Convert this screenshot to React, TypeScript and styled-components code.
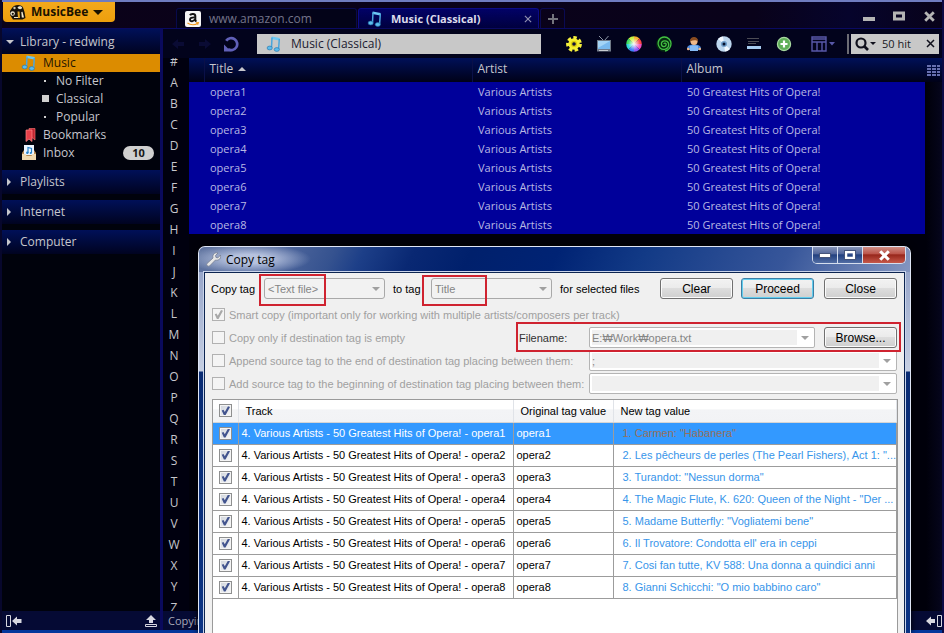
import React from 'react';
import styled, { createGlobalStyle, css } from 'styled-components';

const GlobalStyle = createGlobalStyle`
  *, *::before, *::after { box-sizing: border-box; }
  html, body { margin: 0; background: #00000c; }
  body { font-family: 'Open Sans', 'Noto Sans', sans-serif; font-size: 11px; line-height: 18px; color: #c6c6cc; overflow: hidden; }
  button, input, select { font: inherit; color: inherit; margin: 0; padding: 0; border: 0; background: none; border-radius: 0; outline: 0; }
  svg { display: block; flex: none; }
  ul { margin: 0; padding: 0; list-style: none; }
  table { border-collapse: collapse; table-layout: fixed; width: 100%; }
  th, td { text-align: left; font-weight: 400; padding: 0; }
  h2 { margin: 0; font-weight: 400; font-size: 11px; }
`;

/* ---------- main window ---------- */

const Frame = styled.div`
  position: relative;
  height: 100vh;
  display: flex;
  flex-direction: column;
  overflow: hidden;
  background: #00000c;
  border-left: 2px solid #07072c;
  border-right: 2px solid #0b0a44;
`;

const TitleBar = styled.header`
  display: flex;
  align-items: flex-end;
  height: 29px;
  flex: none;
  border-top: 2px solid #6f7cc0;
  border-bottom: 1px solid #0a0a62;
  background: linear-gradient(90deg, #0b0219 0%, #09021a 80%, #06042c 90%, #08021a 100%);
`;

const AppButton = styled.button`
  display: flex;
  align-items: center;
  align-self: flex-start;
  gap: 5px;
  width: 112px;
  height: 20px;
  margin-left: 1px;
  padding-left: 6px;
  border-radius: 0 0 4px 4px;
  background: linear-gradient(#f3a91c, #ee9f0c);
  color: #1a1200;
  font-size: 12px;
  font-weight: 700;
`;

const Tabs = styled.div`
  display: flex;
  flex: 1;
  gap: 1px;
  height: 20px;
  margin-left: 61px;
`;

const Tab = styled.button<{ $active?: boolean }>`
  display: flex;
  align-items: center;
  width: 181px;
  padding: 0 6px 0 8px;
  border: 1px solid ${p => (p.$active ? '#0c0c86' : '#080a4c')};
  border-bottom: 0;
  border-radius: 3px 3px 0 0;
  background: ${p => (p.$active ? 'linear-gradient(#020266, #00003e)' : '#030318')};
  color: ${p => (p.$active ? '#dcdcec' : '#74748a')};
  font-size: ${p => (p.$active ? '11px' : '12px')};
  font-weight: ${p => (p.$active ? 700 : 400)};
  gap: 8px;
  text-align: left;
  & > span { flex: 1; }
`;

const NewTab = styled.button`
  display: grid;
  place-items: center;
  width: 25px;
  border: 1px solid #0a0a52;
  border-bottom: 0;
  border-radius: 3px 3px 0 0;
`;

const WindowControls = styled.div`
  display: flex;
  gap: 16px;
  align-self: flex-start;
  padding: 6px 6px 0 0;
`;

const IconButton = styled.button`
  display: grid;
  place-items: center;
  min-width: 14px;
  min-height: 16px;
`;

const Workspace = styled.div`
  flex: 1;
  min-height: 0;
  display: grid;
  grid-template-columns: 161px minmax(0, 1fr);
`;

const Sidebar = styled.aside`
  display: flex;
  flex-direction: column;
  border-right: 3px solid #0a0a5c;
  background: #00020c;
`;

const SideSection = styled.section`
  margin-bottom: 6px;
  & > ul { padding-bottom: 2px; }
`;

const SideHeader = styled.button<{ $first?: boolean }>`
  display: flex;
  align-items: center;
  width: 100%;
  height: ${p => (p.$first ? '25px' : '24px')};
  padding-left: 4px;
  gap: ${p => (p.$first ? '6px' : '8px')};
  background: linear-gradient(#001058, #000320);
  font-size: 12px;
  & > svg { width: ${p => (p.$first ? '8px' : '6px')}; }
`;

const SideItem = styled.li<{ $level?: number; $selected?: boolean }>`
  display: flex;
  align-items: center;
  height: 18px;
  padding-left: ${p => (p.$level === 2 ? '38px' : '19px')};
  padding-right: 6px;
  gap: ${p => (p.$level === 2 ? '4px' : '6px')};
  ${p => p.$selected && css`background: #dc8c00; color: #241600;`}
`;

const SideLink = styled.a`
  flex: 1;
  color: inherit;
  text-decoration: none;
  font-size: 12px;
`;

const Count = styled.span`
  width: 31px;
  border-radius: 7px;
  background: #d0d0d0;
  color: #181818;
  font-size: 11px;
  font-weight: 700;
  line-height: 14px;
  text-align: center;
`;

const Main = styled.main`
  display: flex;
  flex-direction: column;
  min-width: 0;
  min-height: 0;
`;

const Toolbar = styled.div`
  display: flex;
  align-items: center;
  height: 29px;
  flex: none;
  padding-right: 3px;
  background: #02031c;
`;

const NavButtons = styled.div`
  display: flex;
  gap: 12px;
  padding: 0 18px 0 8px;
`;

const AddressBox = styled.label`
  display: flex;
  align-items: center;
  flex: 1;
  height: 20px;
  gap: 9px;
  padding-left: 9px;
  background: #c8c8c8;
  color: #1b1b30;
  & > input { flex: 1; min-width: 0; font-size: 12px; }
`;

const ToolIcons = styled.div`
  display: flex;
  gap: 14px;
  padding: 0 19px 0 25px;
`;

const SearchGroup = styled.div`
  display: flex;
  align-items: center;
  width: 92px;
  height: 20px;
  margin-left: 11px;
  padding: 0 4px 0 6px;
  gap: 6px;
  border-left: 2px solid #6c6c74;
  background: linear-gradient(90deg, #02031c 2px, #c8c8c8 2px);
  color: #181824;
  & > input { flex: 1; min-width: 0; font-size: 11px; }
`;

const Browser = styled.div`
  flex: 1;
  min-height: 0;
  display: grid;
  grid-template-columns: 26px minmax(0, 1fr);
`;

const LetterBar = styled.nav`
  display: flex;
  flex-direction: column;
  overflow: hidden;
  padding-right: 4px;
  background: #00000f;
  & > button { flex: none; height: 21px; line-height: 21px; font-size: 12px; }
  & > button:first-child { height: 14px; line-height: 8px; padding-bottom: 6px; }
`;

const TrackPane = styled.div`
  overflow: hidden;
  background: linear-gradient(270deg, #05051c, #00000a 16px);
`;

const TrackTable = styled.table`
  thead tr { height: 24px; background: linear-gradient(#001058, #000118); }
  tbody tr { height: 19px; }
  tbody td:not(:last-child) { background: #00009a; }
  th, td { padding-left: 6px; white-space: nowrap; overflow: hidden; }
  th { padding-left: 5px; font-size: 12px; line-height: 22px; border-left: 1px solid #0a1048; vertical-align: top; }
  th:first-child, th:last-child { border-left: 0; padding-left: 2px; }
  th:last-child { vertical-align: middle; }
  td { color: #b8b8e4; line-height: 19px; }
`;

const SortLabel = styled.span`
  display: flex;
  align-items: center;
  gap: 5px;
`;

const StatusBar = styled.footer`
  display: grid;
  grid-template-columns: 161px 1fr auto;
  align-items: center;
  height: 22px;
  flex: none;
  border-bottom: 3px solid #04379c;
  background: #050a34;
  color: #a8a8b8;
`;

const StatusLeft = styled.div`
  display: flex;
  justify-content: space-between;
  height: 19px;
  align-items: center;
  padding: 0 2px 0 4px;
  border-right: 3px solid #0a0a5c;
`;

const StatusText = styled.span`
  padding-left: 5px;
`;

/* ---------- dialog ---------- */

const Dialog = styled.section`
  position: absolute;
  left: 196px;
  right: 31px;
  top: 246px;
  bottom: 0;
  display: flex;
  flex-direction: column;
  padding: 0 5px;
  border: 1px solid #dfe6f6;
  border-bottom: 0;
  border-radius: 7px 7px 0 0;
  background: linear-gradient(#8c9cc4 0, #c6cfe2 124px, #0a2c74 125px, #0c3484 100%);
  box-shadow: 0 0 6px #000;
  font-family: 'Liberation Sans', Arial, 'Noto Sans CJK KR', sans-serif;
  font-size: 11px;
  color: #000;
`;

const DialogTitle = styled.div`
  display: flex;
  height: 25px;
  flex: none;
  margin: 0 -5px;
  padding: 0 4px 0 7px;
  border-radius: 6px 6px 0 0;
  background:
    radial-gradient(ellipse 62px 15px at 50px 12px, #b6c2de 30%, transparent),
    linear-gradient(115deg, #60749f 0, #52699e 11%, #35528f 19%, #1d3f88 23%, #092873 30%, #00206c 38%, #002374 50%, #123a86 62%, #37569a 82%, #8496c0 100%);
  & > h2 { flex: 1; padding-left: 5px; line-height: 25px; font-family: 'Open Sans', 'Noto Sans', sans-serif; font-size: 12px; }
  & > svg { margin-top: 4px; }
`;

const CaptionButtons = styled.div`
  display: flex;
  height: 17px;
  border: 1px solid #d5deee;
  border-top: 0;
  border-radius: 0 0 5px 5px;
  overflow: hidden;
`;

const CaptionButton = styled.button<{ $close?: boolean }>`
  display: grid;
  place-items: center;
  width: ${p => (p.$close ? '42px' : '25px')};
  border-right: ${p => (p.$close ? '0' : '1px solid #d5deee')};
  background: ${p =>
    p.$close
      ? 'linear-gradient(#cf8d84, #bb5147 45%, #96251a 48%, #c6584a)'
      : 'linear-gradient(#8492b6, #50659a 45%, #213f7e 48%, #526da4)'};
`;

const DialogBody = styled.div`
  flex: 1;
  min-height: 0;
  display: flex;
  flex-direction: column;
  border: 1px solid #0c2450;
  border-bottom: 0;
  padding: 4px 7px 0 6px;
  background: #f0f0f0;
  outline: 1px solid #c9d4ea;
`;

const TopRow = styled.div`
  display: flex;
  align-items: center;
  height: 23px;
  margin-bottom: 3px;
  white-space: nowrap;
`;

const TagField = styled.div<{ $width: number }>`
  display: flex;
  align-items: center;
  justify-content: space-between;
  width: ${p => p.$width}px;
  padding-right: 8px;
`;

const SelectWrap = styled.span`
  position: relative;
  display: block;
  width: 121px;
  height: 21px;
  & > select {
    appearance: none;
    width: 100%;
    height: 21px;
    padding-left: 3px;
    border: 1px solid #a9a9a9;
    border-radius: 3px;
    background: #f2f2f2;
    color: #858585;
    opacity: 1;
  }
  & > svg { position: absolute; right: 5px; top: 9px; pointer-events: none; }
`;

const Mark = styled.i<{ $left: string; $right: string; $top: string; $bottom: string }>`
  position: absolute;
  left: ${p => p.$left};
  right: ${p => p.$right};
  top: ${p => p.$top};
  bottom: ${p => p.$bottom};
  border: 2px solid #cf2330;
  pointer-events: none;
`;

const Buttons = styled.div`
  display: flex;
  flex: 1;
  justify-content: flex-end;
  gap: 8px;
  & > button:last-child { margin-left: 2px; }
`;

const PushButton = styled.button<{ $primary?: boolean }>`
  width: 73px;
  height: 21px;
  border: 1px solid ${p => (p.$primary ? '#3c7fa5' : '#707070')};
  border-radius: 3px;
  background: linear-gradient(#f2f2f2, #ebebeb 48%, #dddddd 50%, #cfcfcf);
  box-shadow: inset 0 0 0 1px ${p => (p.$primary ? '#62cdee' : '#fbfbfb')};
  color: #000;
  font-size: 12px;
  line-height: 18px;
  text-align: center;
`;

const Options = styled.div`
  position: relative;
  display: grid;
  grid-template-columns: 378px minmax(0, 1fr) 73px;
  grid-auto-rows: 23px;
  align-items: center;
  margin-bottom: 4px;
  & > button { grid-column: 3; }
`;

const Cell = styled.div<{ $from?: number; $to?: number; $gap?: boolean }>`
  display: flex;
  align-items: center;
  justify-content: space-between;
  grid-column: ${p => p.$from ?? 1} / ${p => p.$to ?? 2};
  padding-right: ${p => (p.$gap ? '9px' : '0')};
  white-space: nowrap;
  & > label[for='filename'] { width: 70px; color: #333; }
`;

const CheckLabel = styled.label`
  display: flex;
  align-items: center;
  gap: 4px;
  padding-left: 1px;
  color: #a0a0a0;
`;

const Check = styled.input.attrs({ type: 'checkbox' })`
  appearance: none;
  display: grid;
  place-items: center;
  flex: none;
  width: 13px;
  height: 13px;
  border: 1px solid #8e8f8f;
  background: linear-gradient(135deg, #cfd4dc, #f8f8f8);
  box-shadow: inset 0 0 0 1px #f4f4f4;
  &:checked::before {
    content: '';
    width: 9px;
    height: 9px;
    background: #42548e;
    clip-path: polygon(8% 48%, 28% 40%, 42% 64%, 78% 0, 100% 8%, 50% 100%, 32% 100%);
  }
  &:disabled { border-color: #b1b1b1; background: #f4f4f4; }
  &:disabled::before { background: #a8a8a8; }
`;

const Combo = styled.div`
  position: relative;
  display: flex;
  flex: 1;
  height: 21px;
  padding: 2px;
  border: 1px solid #b4b4b4;
  border-radius: 2px;
  background: #fff;
  & > input { flex: 1; min-width: 0; background: #f0f0f0; color: #858585; padding-left: 0; }
  & > button { display: grid; place-items: center; width: 15px; }
`;

const TagTable = styled.div`
  flex: 1;
  min-height: 0;
  margin: 0 -1px 0 1px;
  border: 1px solid #9a9a9a;
  border-bottom: 0;
  background: #fff;
  overflow: hidden;
  table { width: 100%; }
  thead tr { height: 22px; background: linear-gradient(#fff 40%, #f3f4f6 45%, #f2f3f5); }
  th { border-right: 1px solid #e0e3e8; padding-left: 7px; border-bottom: 1px solid #d5d5d5; }
  tbody tr { height: 22px; }
  td { border: 1px solid #9c9c9c; border-left: 0; padding-left: 3px; overflow: hidden; white-space: nowrap; line-height: 20px; }
  td:last-child { padding: 0 0 0 9px; color: #3795ea; }
  th:first-child, td:first-child { padding: 0 0 0 6px; }
`;

const TagRow = styled.tr<{ $selected?: boolean }>`
  ${p => p.$selected && css`
    background: #3399ff;
    color: #fff;
    && td:last-child { color: #97705c; }
  `}
`;

/* ---------- drawings ---------- */

const NoteIcon = () => (
  <svg width="16" height="16" viewBox="0 0 16 16">
    <path d="M5.500 1.800 13.500 3.200" stroke="#6cc8f4" strokeWidth="2.600" />
    <path d="M6 1.500 5.500 11.500M13.300 3 12.600 13" stroke="#4aa6dc" strokeWidth="1.500" />
    <ellipse cx="3.700" cy="12" rx="2.600" ry="1.900" fill="#5cbcec" stroke="#1e6ea8" strokeWidth=".6" />
    <ellipse cx="10.800" cy="13.500" rx="2.600" ry="1.900" fill="#5cbcec" stroke="#1e6ea8" strokeWidth=".6" />
  </svg>
);

const BeeIcon = () => (
  <svg width="17" height="16" viewBox="0 0 17 16">
    <path d="M3 4C5 0 13 0 14 3.500l1.500 4.500 1 6-3 1.500H4L1 11V7z" fill="#16120a" />
    <path d="M8.500 3.500c1.500-2 4.500-1.500 4.700.5-.8 1.600-3.700 1.600-4.700-.5z" fill="#e9e4d0" />
    <circle cx="5.500" cy="4" r="1.200" fill="#cfc8b0" />
    <circle cx="3.600" cy="9.500" r="2.300" fill="#e8e2cc" />
    <circle cx="3.800" cy="9.800" r="1.100" fill="#16120a" />
    <path d="M8.500 7.500h2l.5 6.500H9z" fill="#e6a822" />
    <path d="m12.300 8 1.200-.2 1.500 5.700h-2.200z" fill="#f3ead0" />
    <path d="M5 13.500h4" stroke="#e8e2cc" />
  </svg>
);

const AmazonIcon = () => (
  <svg width="16" height="16" viewBox="0 0 16 16">
    <rect width="16" height="16" rx="2" fill="#f6f6f6" />
    <path d="M5 4.200C5.800 2.500 10.300 2.300 10.300 5v4.500l1 1.200" fill="none" stroke="#111" strokeWidth="2" />
    <path d="M9.800 6.400C6.500 6.200 5 7.200 5 8.700 5 11 9 10.800 9.900 8" fill="none" stroke="#111" strokeWidth="1.900" />
    <path d="M2.500 12c3 2.200 7.500 2.200 10.500.2M11 11.800l2.400-.2-.8 2.200" fill="none" stroke="#f09a20" strokeWidth="1.100" />
  </svg>
);

const Triangle = ({ dir = 'down', w = 7, color = '#c6c6cc' }: { dir?: 'down' | 'up' | 'right'; w?: number; color?: string }) => {
  const d = { down: 'M0 0h8L4 4z', up: 'M0 4h8L4 0z', right: 'M0 0v8l4-4z' }[dir];
  const side = dir === 'right';
  return (
    <svg width={side ? w / 2 : w} height={side ? w : w / 2} viewBox={side ? '0 0 4 8' : '0 0 8 4'}>
      <path d={d} fill={color} />
    </svg>
  );
};

const BookmarkIcon = () => (
  <svg width="16" height="16" viewBox="0 0 16 16">
    <path d="M8 1.500h6V13l-2.500-2L9 13z" fill="#c02430" stroke="#ee6a6a" strokeWidth=".7" />
    <path d="M5 3h6v11.500L8 12l-3 2.500z" fill="#e8404a" stroke="#ff8a8a" strokeWidth=".7" />
  </svg>
);

const InboxIcon = () => (
  <svg width="16" height="16" viewBox="0 0 16 16">
    <path d="M1 8 3 5h10l2 3v6.500H1z" fill="#b98a50" />
    <path d="M3 0h10v10H3z" fill="#edf5ff" />
    <path d="M7 8V2.500l3.500 1V8" stroke="#2782c8" strokeWidth="1.200" fill="none" />
    <circle cx="6.300" cy="7.800" r="1.200" fill="#2782c8" />
    <circle cx="9.800" cy="8" r="1.100" fill="#2782c8" />
    <path d="M1 9h3.500l1 2h5l1-2H15v6H1z" fill="#f1d9ae" />
  </svg>
);

const RefreshIcon = () => (
  <svg width="16" height="16" viewBox="0 0 16 16">
    <path d="M3.200 4.800A6 6 0 1 1 5 13.200" fill="none" stroke="#6060b8" strokeWidth="2.700" />
    <path d="M1 8.500v7h7z" fill="#6060b8" />
  </svg>
);

const ArrowIcon = ({ flip }: { flip?: boolean }) => (
  <svg width="13" height="12" viewBox="0 0 13 12">
    <path d={flip ? 'M13 6 7 1v3H1v4h6v3z' : 'M0 6l6-5v3h6v4H6v3z'} fill="#0a0b34" />
  </svg>
);

const GearIcon = () => (
  <svg width="16" height="16" viewBox="0 0 16 16">
    <circle cx="8" cy="8" r="5.700" fill="#f5ee2c" />
    <circle cx="8" cy="8" r="6.200" fill="none" stroke="#f5f03c" strokeWidth="3.400" strokeDasharray="3.300 2.265" />
    <circle cx="8" cy="8" r="3" fill="#d8c80c" />
    <circle cx="8" cy="8" r="1.800" fill="#14143c" />
  </svg>
);

const TvIcon = () => (
  <svg width="16" height="16" viewBox="0 0 16 16">
    <path d="m3 0 5 5 4.500-5" fill="none" stroke="#8c96a4" />
    <rect x="1" y="4" width="14" height="11.500" fill="#707a88" />
    <rect x="2" y="5" width="12" height="8" fill="#79b9ee" />
    <path d="M2 5h12L2 12z" fill="#a4d4f6" />
    <path d="M3 14.500h9" stroke="#c8ccd2" />
  </svg>
);

const wheel = ['#f8b030', '#fa4848', '#f050c0', '#9058f8', '#4080f8', '#30d8d8', '#40e060', '#c8f040'];
const ColorIcon = () => (
  <svg width="16" height="16" viewBox="-8 -8 16 16">
    <defs>
      <radialGradient id="wheelGlow"><stop offset="0" stopColor="#fff" /><stop offset=".8" stopColor="#fff" stopOpacity="0" /></radialGradient>
    </defs>
    {wheel.map((c, i) => (
      <path key={c} d="M0 0V-7.800A7.800 7.800 0 0 1 5.520-5.520z" fill={c} transform={`rotate(${i * 45})`} />
    ))}
    <circle r="7.800" fill="url(#wheelGlow)" />
  </svg>
);

const SpiralIcon = () => (
  <svg width="16" height="16" viewBox="0 0 16 16">
    <circle cx="8" cy="8" r="7.800" fill="#052a10" />
    <path d="M8 8c0-1.500 2.400-1 2.200.7-.3 2.600-4.800 2.500-4.800-.7 0-4 6.200-4.400 7.200-.4 1 5-5.300 7.400-8.500 4.400C-.4 7 3.600 1 8.500 1c3.500 0 6.500 3 6.500 6.500 0 3-2 6.500-6 7.500" fill="none" stroke="#44c044" strokeWidth="1.300" />
  </svg>
);

const PersonIcon = () => (
  <svg width="16" height="16" viewBox="0 0 16 16">
    <path d="M1 13c0-3.500 3-4.500 7-4.500s7 1 7 4.500l-2 1H3z" fill="#4a8ae0" />
    <path d="M4 10c2-1 6-1 8 0v5H4z" fill="#86baf4" />
    <circle cx="2.300" cy="13" r="1.300" fill="#f0b888" />
    <circle cx="13.700" cy="13" r="1.300" fill="#f0b888" />
    <circle cx="8" cy="5.300" r="3.600" fill="#f0b888" />
    <path d="M4 5.500C3.500-.5 12.500-.5 12 5.500 10 3.500 7 4 4 5.500z" fill="#8a4c20" />
  </svg>
);

const DiscIcon = () => (
  <svg width="16" height="16" viewBox="0 0 16 16">
    <circle cx="8" cy="8" r="7.700" fill="#bcd6ee" />
    <path d="M8 8 2 3a8 8 0 0 1 5-2.600zM8 8l6 5a8 8 0 0 1-5 2.600z" fill="#f2f8ff" />
    <circle cx="8" cy="8" r="3" fill="#6e9cc8" />
    <circle cx="8" cy="8" r="1.500" fill="#06102c" />
  </svg>
);

const LinesIcon = () => (
  <svg width="16" height="16" viewBox="0 0 16 16">
    <path d="M1 2.500h12M2 5.500h11M2 7.500h8" stroke="#4c4c54" />
    <path d="M1 10h14v3H1z" fill="#a8cdf0" />
  </svg>
);

const PlusIcon = () => (
  <svg width="16" height="16" viewBox="0 0 16 16">
    <circle cx="8" cy="8" r="6.600" fill="#5fae58" stroke="#a8d8a0" strokeWidth="1.200" />
    <path d="M8 4.500v7M4.500 8h7" stroke="#fff" strokeWidth="2.200" />
  </svg>
);

const LayoutIcon = () => (
  <svg width="25" height="16" viewBox="0 0 25 16">
    <path d="M1 1h14v14H1zM1 6h14M6 6v9M11 6v9M1 3h14" fill="none" stroke="#5858a8" strokeWidth="1.400" />
    <path d="M18 6h6l-3 3.500z" fill="#5858a8" />
  </svg>
);

const SearchIcon = () => (
  <svg width="21" height="14" viewBox="0 0 21 14">
    <circle cx="6" cy="6" r="4.500" fill="none" stroke="#10101c" strokeWidth="2.200" />
    <path d="m9 9 4 4" stroke="#10101c" strokeWidth="2.600" />
    <path d="M15 5h6l-3 3z" fill="#10101c" />
  </svg>
);

const CrossIcon = ({ size = 9, color = '#10101c', w = 1.5 }: { size?: number; color?: string; w?: number }) => (
  <svg width={size} height={size} viewBox="0 0 9 9">
    <path d="m1 1 7 7M8 1 1 8" stroke={color} strokeWidth={w} />
  </svg>
);

const GridIcon = () => (
  <svg width="13" height="11" viewBox="0 0 13 11">
    {[0, 3, 6, 9].map(y => <path key={y} d={`M0 ${y + 1}h4M5 ${y + 1}h4M10 ${y + 1}h3`} stroke="#6870b0" strokeWidth="2" />)}
  </svg>
);

const DockIcon = ({ right }: { right?: boolean }) => (
  <svg width="16" height="12" viewBox="0 0 16 12">
    <path d={right ? 'M11.500 .5h4v11h-4z' : 'M.5 .5h4v11h-4z'} fill="none" stroke="#d8d8e0" />
    <path d={right ? 'M0 6l5-4.500V4h4v4H5v2.500z' : 'M6 6l5-4.500V4h4.500v4H11v2.500z'} fill="#d8d8e0" />
  </svg>
);

const EjectIcon = () => (
  <svg width="12" height="12" viewBox="0 0 12 12">
    <path d="m6 0 5 5H8v3H4V5H1z" fill="#d8d8e0" />
    <path d="M.5 9.500h11v2H.5z" fill="none" stroke="#d8d8e0" />
  </svg>
);

const WrenchIcon = () => (
  <svg width="15" height="16" viewBox="0 0 15 16">
    <path d="M1 12.500 7 7c-1-3 1.500-6 5-5L9.500 4.500l.5 2 2 .3L14.500 4c1 3.500-2 6-5 5L3.500 15C1.500 16 0 14 1 12.500z" fill="#e6e6e6" stroke="#747c90" strokeWidth=".8" />
  </svg>
);

/* ---------- data ---------- */

const tracks = Array.from({ length: 8 }, (_, i) => `opera${i + 1}`);
const letters = ['#', ...'ABCDEFGHIJKLMNOPQRSTUVWXYZ'];
const newTags = [
  '1. Carmen: "Habanera"',
  '2. Les pêcheurs de perles (The Pearl Fishers), Act 1: "...',
  '3. Turandot: "Nessun dorma"',
  '4. The Magic Flute, K. 620: Queen of the Night - "Der ...',
  '5. Madame Butterfly: "Vogliatemi bene"',
  "6. Il Trovatore: Condotta ell' era in ceppi",
  '7. Cosi fan tutte, KV 588: Una donna a quindici anni',
  '8. Gianni Schicchi: "O mio babbino caro"',
];
const tools = [
  ['Preferences', GearIcon], ['Video', TvIcon], ['Skins', ColorIcon], ['Visualiser', SpiralIcon],
  ['Artist', PersonIcon], ['Disc', DiscIcon], ['Playing', LinesIcon], ['Add', PlusIcon],
] as const;

const ComboField = ({ id, label, value }: { id: string; label?: string; value: string }) => (
  <Combo>
    <input id={id} aria-label={label} value={value} disabled readOnly />
    <button aria-label="Show choices" disabled><Triangle color="#a0a0a0" w={8} /></button>
  </Combo>
);

const CopyTagDialog = () => (
  <Dialog role="dialog" aria-labelledby="dialog-title">
    <DialogTitle>
      <WrenchIcon />
      <h2 id="dialog-title">Copy tag</h2>
      <CaptionButtons>
        <CaptionButton aria-label="Minimize">
          <svg width="12" height="5"><rect x=".5" y=".5" width="11" height="4" fill="#fff" stroke="#46557a" /></svg>
        </CaptionButton>
        <CaptionButton aria-label="Maximize">
          <svg width="12" height="10"><rect x="2" y="2" width="8" height="6" fill="none" stroke="#fff" strokeWidth="2.500" /><rect x=".5" y=".5" width="11" height="9" fill="none" stroke="#46557a" /></svg>
        </CaptionButton>
        <CaptionButton $close aria-label="Close dialog"><CrossIcon size={11} color="#fff" w={2.5} /></CaptionButton>
      </CaptionButtons>
    </DialogTitle>
    <DialogBody>
      <TopRow>
        <TagField $width={182}>
          <label htmlFor="source">Copy tag</label>
          <SelectWrap>
            <select id="source" disabled><option>&lt;Text file&gt;</option></select>
            <Triangle color="#a0a0a0" w={8} />
            <Mark $left="-5px" $right="59px" $top="-4px" $bottom="-7px" />
          </SelectWrap>
        </TagField>
        <TagField $width={167}>
          <label htmlFor="target">to tag</label>
          <SelectWrap>
            <select id="target" disabled><option>Title</option></select>
            <Triangle color="#a0a0a0" w={8} />
            <Mark $left="-9px" $right="65px" $top="-3px" $bottom="-7px" />
          </SelectWrap>
        </TagField>
        <span>for selected files</span>
        <Buttons>
          <PushButton>Clear</PushButton>
          <PushButton $primary>Proceed</PushButton>
          <PushButton>Close</PushButton>
        </Buttons>
      </TopRow>
      <Options>
        <Cell $to={4}>
          <CheckLabel><Check disabled defaultChecked />Smart copy (important only for working with multiple artists/composers per track)</CheckLabel>
        </Cell>
        <Cell>
          <CheckLabel><Check disabled />Copy only if destination tag is empty</CheckLabel>
          <label htmlFor="filename">Filename:</label>
        </Cell>
        <Cell $from={2} $to={3} $gap><ComboField id="filename" value="E:₩Work₩opera.txt" /></Cell>
        <PushButton>Browse...</PushButton>
        <Cell><CheckLabel><Check disabled />Append source tag to the end of destination tag placing between them:</CheckLabel></Cell>
        <Cell $from={2} $to={4}><ComboField id="append" label="Separator when appending" value=";" /></Cell>
        <Cell><CheckLabel><Check disabled />Add source tag to the beginning of destination tag placing between them:</CheckLabel></Cell>
        <Cell $from={2} $to={4}><ComboField id="prepend" label="Separator when prepending" value="" /></Cell>
        <Mark $left="305px" $right="-4px" $top="19px" $bottom="43px" />
      </Options>
      <TagTable>
        <table>
          <colgroup><col width="25" /><col width="275" /><col width="100" /><col /></colgroup>
          <thead>
            <tr><th><Check defaultChecked aria-label="Select all tracks" /></th><th>Track</th><th>Original tag value</th><th>New tag value</th></tr>
          </thead>
          <tbody>
            {tracks.map((t, i) => (
              <TagRow key={t} $selected={i === 0}>
                <td><Check defaultChecked aria-label={`Include ${t}`} /></td>
                <td>4. Various Artists - 50 Greatest Hits of Opera! - {t}</td>
                <td>{t}</td>
                <td>{newTags[i]}</td>
              </TagRow>
            ))}
          </tbody>
        </table>
      </TagTable>
    </DialogBody>
  </Dialog>
);

export default function App() {
  return (
    <Frame>
      <GlobalStyle />
      <TitleBar>
        <AppButton><BeeIcon />MusicBee<Triangle color="#1a1200" w={10} /></AppButton>
        <Tabs>
          <Tab><AmazonIcon /><span>www.amazon.com</span></Tab>
          <Tab $active><NoteIcon /><span>Music (Classical)</span><CrossIcon size={8} color="#9090b0" w={1.3} /></Tab>
          <NewTab aria-label="New tab">
            <svg width="10" height="10"><path d="M5 0v10M0 5h10" stroke="#74747c" strokeWidth="2" /></svg>
          </NewTab>
        </Tabs>
        <WindowControls>
          <IconButton aria-label="Minimize window"><svg width="12" height="12"><rect y="7" width="12" height="4" fill="#b4b4b4" /></svg></IconButton>
          <IconButton aria-label="Maximize window"><svg width="12" height="10"><rect x="1.500" y="2" width="9" height="6" fill="none" stroke="#b4b4b4" strokeWidth="3" /></svg></IconButton>
          <IconButton aria-label="Close window"><CrossIcon size={11} color="#b4b4b4" w={2.3} /></IconButton>
        </WindowControls>
      </TitleBar>
      <Workspace>
        <Sidebar>
          <SideSection>
            <SideHeader $first><Triangle w={8} />Library - redwing</SideHeader>
            <ul>
              <SideItem $selected><NoteIcon /><SideLink href="#music">Music</SideLink></SideItem>
              <SideItem $level={2}><svg width="12" height="8"><rect x="4" y="3" width="2" height="2" fill="#d0d0d0" /></svg><SideLink href="#nofilter">No Filter</SideLink></SideItem>
              <SideItem $level={2}><svg width="12" height="8"><rect x="2" y="0" width="7" height="7" fill="#d0d0d0" /></svg><SideLink href="#classical">Classical</SideLink></SideItem>
              <SideItem $level={2}><svg width="12" height="8"><rect x="4" y="3" width="2" height="2" fill="#d0d0d0" /></svg><SideLink href="#popular">Popular</SideLink></SideItem>
              <SideItem><BookmarkIcon /><SideLink href="#bookmarks">Bookmarks</SideLink></SideItem>
              <SideItem><InboxIcon /><SideLink href="#inbox">Inbox</SideLink><Count>10</Count></SideItem>
            </ul>
          </SideSection>
          {['Playlists', 'Internet', 'Computer'].map(s => (
            <SideSection key={s}><SideHeader><Triangle dir="right" w={8} />{s}</SideHeader></SideSection>
          ))}
        </Sidebar>
        <Main>
          <Toolbar>
            <NavButtons>
              <IconButton aria-label="Back"><ArrowIcon /></IconButton>
              <IconButton aria-label="Forward"><ArrowIcon flip /></IconButton>
              <IconButton aria-label="Refresh"><RefreshIcon /></IconButton>
            </NavButtons>
            <AddressBox><NoteIcon /><input aria-label="Location" defaultValue="Music (Classical)" /></AddressBox>
            <ToolIcons>
              {tools.map(([name, Icon]) => <IconButton key={name} aria-label={name}><Icon /></IconButton>)}
            </ToolIcons>
            <IconButton aria-label="Layout"><LayoutIcon /></IconButton>
            <SearchGroup>
              <SearchIcon />
              <input aria-label="Search" defaultValue="50 hit" />
              <button aria-label="Clear search"><CrossIcon /></button>
            </SearchGroup>
          </Toolbar>
          <Browser>
            <LetterBar aria-label="Jump to letter">{letters.map(l => <button key={l}>{l}</button>)}</LetterBar>
            <TrackPane>
              <TrackTable>
                <colgroup><col width="15" /><col width="268" /><col width="209" /><col /><col width="17" /></colgroup>
                <thead>
                  <tr><th /><th><SortLabel>Title<Triangle dir="up" w={8} /></SortLabel></th><th>Artist</th><th>Album</th><th><GridIcon /></th></tr>
                </thead>
                <tbody>
                  {tracks.map(t => (
                    <tr key={t}><td /><td>{t}</td><td>Various Artists</td><td>50 Greatest Hits of Opera!</td><td /></tr>
                  ))}
                </tbody>
              </TrackTable>
            </TrackPane>
          </Browser>
        </Main>
      </Workspace>
      <StatusBar>
        <StatusLeft>
          <IconButton aria-label="Hide left panel"><DockIcon /></IconButton>
          <IconButton aria-label="Send"><EjectIcon /></IconButton>
        </StatusLeft>
        <StatusText>Copying</StatusText>
        <IconButton aria-label="Hide right panel"><DockIcon right /></IconButton>
      </StatusBar>
      <CopyTagDialog />
    </Frame>
  );
}
